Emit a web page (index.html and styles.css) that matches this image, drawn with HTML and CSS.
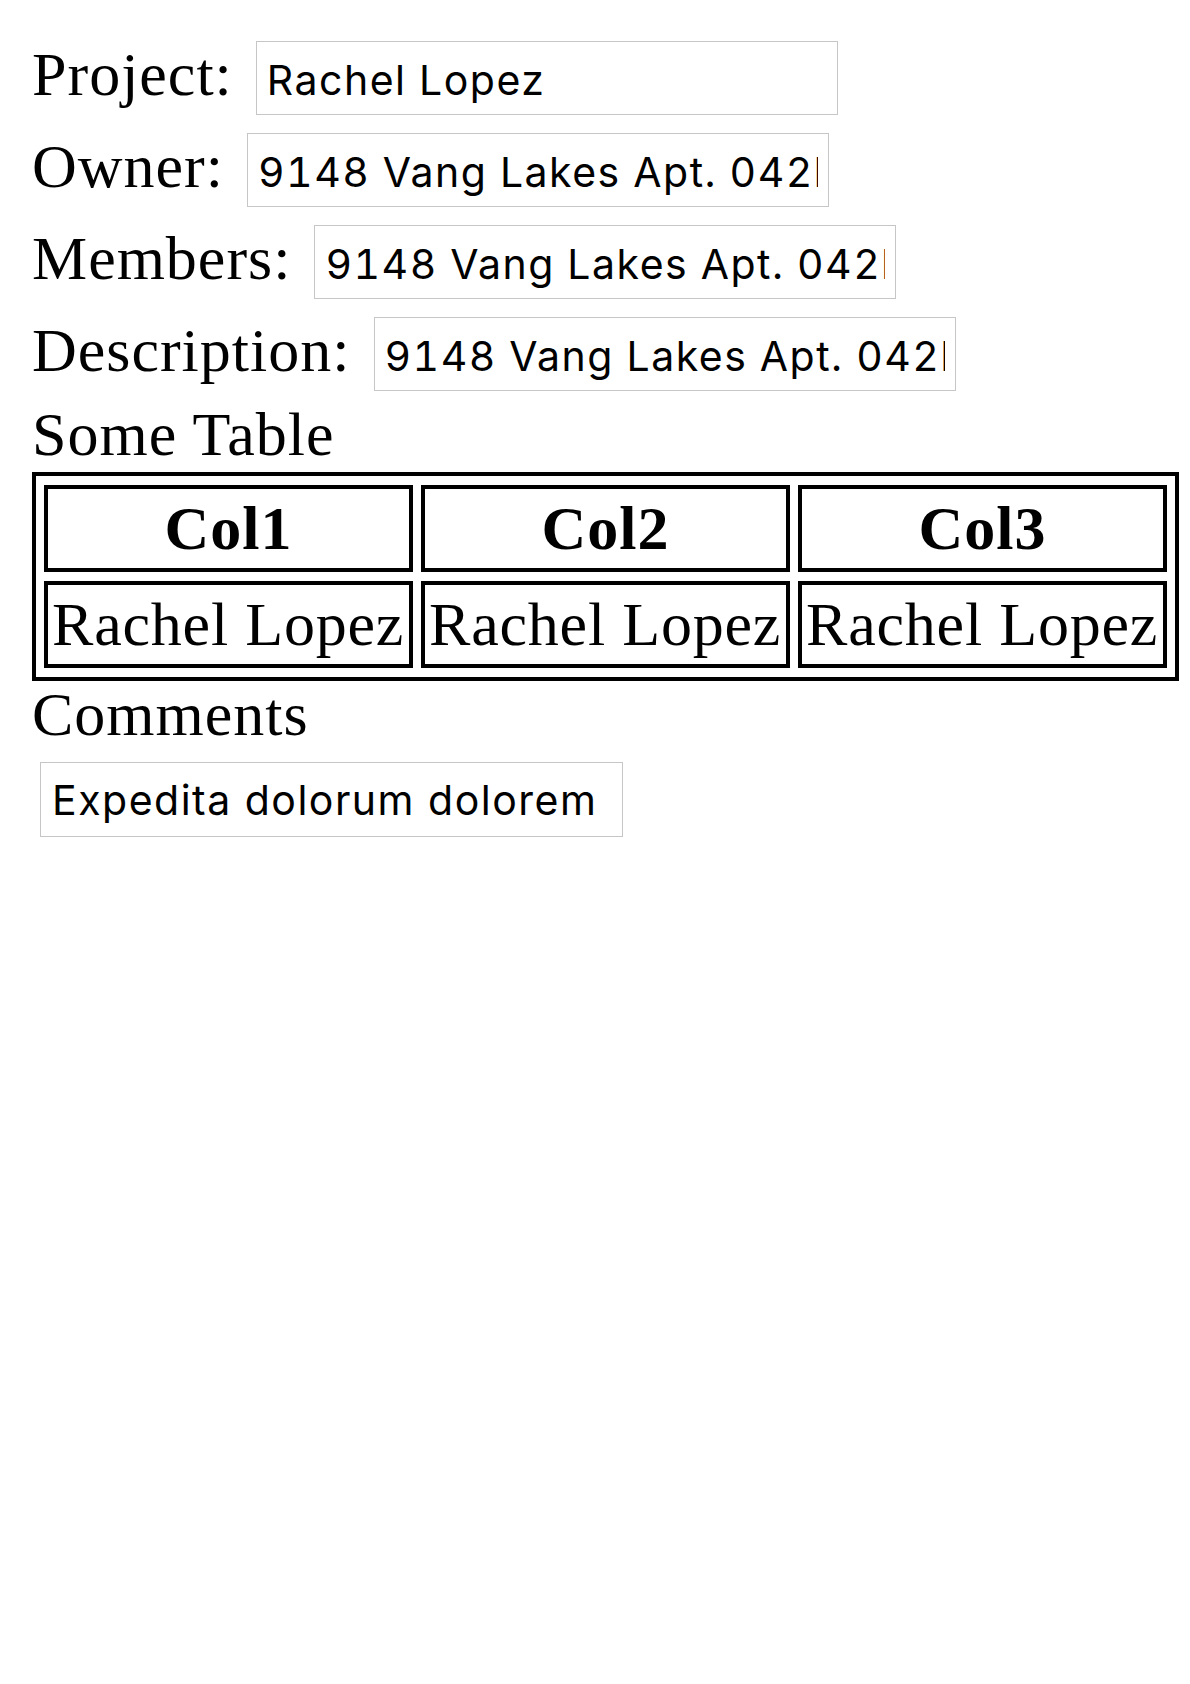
FILE: index.html
```html
<!DOCTYPE html>
<html>
<head>
<meta charset="utf-8">
<title>Project</title>
<link rel="stylesheet" href="styles.css">
</head>
<body>
<div class="page">
  <div class="fields">
    <div class="field">
      <label class="label" for="project">Project:</label>
      <input class="control" id="project" type="text" value="Rachel Lopez">
    </div>
    <div class="field">
      <label class="label" for="owner">Owner:</label>
      <input class="control" id="owner" type="text" value="9148 Vang Lakes Apt. 042lLake Kevinfurt, NM 88412">
    </div>
    <div class="field">
      <label class="label" for="members">Members:</label>
      <input class="control" id="members" type="text" value="9148 Vang Lakes Apt. 042lLake Kevinfurt, NM 88412">
    </div>
    <div class="field">
      <label class="label" for="description">Description:</label>
      <input class="control" id="description" type="text" value="9148 Vang Lakes Apt. 042lLake Kevinfurt, NM 88412">
    </div>
  </div>
  <div class="heading heading-table">Some Table</div>
  <table class="grid">
    <thead>
      <tr><th>Col1</th><th>Col2</th><th>Col3</th></tr>
    </thead>
    <tbody>
      <tr><td>Rachel Lopez</td><td>Rachel Lopez</td><td>Rachel Lopez</td></tr>
    </tbody>
  </table>
  <div class="heading heading-comments">Comments</div>
  <textarea class="comments" rows="1">Expedita dolorum dolorem</textarea>
</div>
</body>
</html>
```
FILE: styles.css
```css
html, body {
  margin: 0;
  padding: 0;
  background: #ffffff;
}

body {
  font-family: "Liberation Serif", "Times New Roman", serif;
  font-size: 62px;
  letter-spacing: 1px;
  color: #000000;
}

.page {
  padding: 32px 11px 32px 32px;
}

.fields {
  display: flex;
  flex-direction: column;
  gap: 18px;
  margin-top: 9px;
  margin-bottom: 8px;
}

.field {
  display: flex;
  align-items: baseline;
  gap: 23px;
}

.label {
  line-height: 62px;
  white-space: nowrap;
}

.control {
  box-sizing: border-box;
  width: 582px;
  height: 74px;
  margin: 0;
  padding: 4px 10px 0;
  border: 1px solid #c6c6c6;
  border-radius: 0;
  background: #ffffff;
  color: #000000;
  font-family: Inter, "Liberation Sans", sans-serif;
  font-size: 41px;
  font-variant-numeric: tabular-nums;
  letter-spacing: 1.5px;
  outline: none;
}

.heading {
  line-height: 70px;
}

.heading-table {
  margin-bottom: 3px;
}

.heading-comments {
  line-height: 66px;
}

.grid {
  width: 1147px;
  border: 4px solid #000000;
  border-spacing: 8px 9px;
  font-size: 62px;
}

.grid th,
.grid td {
  border: 4px solid #000000;
  padding: 4px;
  white-space: nowrap;
}

.grid th {
  font-weight: bold;
  text-align: center;
}

.grid td {
  text-align: left;
  letter-spacing: 0.8px;
}

.comments {
  display: block;
  box-sizing: border-box;
  width: 583px;
  height: 75px;
  margin: 15px 0 0 8px;
  padding: 12px 6px 6px 11px;
  border: 1px solid #c6c6c6;
  border-radius: 0;
  resize: none;
  overflow: hidden;
  color: #000000;
  font-family: Inter, "Liberation Sans", sans-serif;
  font-size: 41px;
  letter-spacing: 1.5px;
  line-height: normal;
  outline: none;
}
```
